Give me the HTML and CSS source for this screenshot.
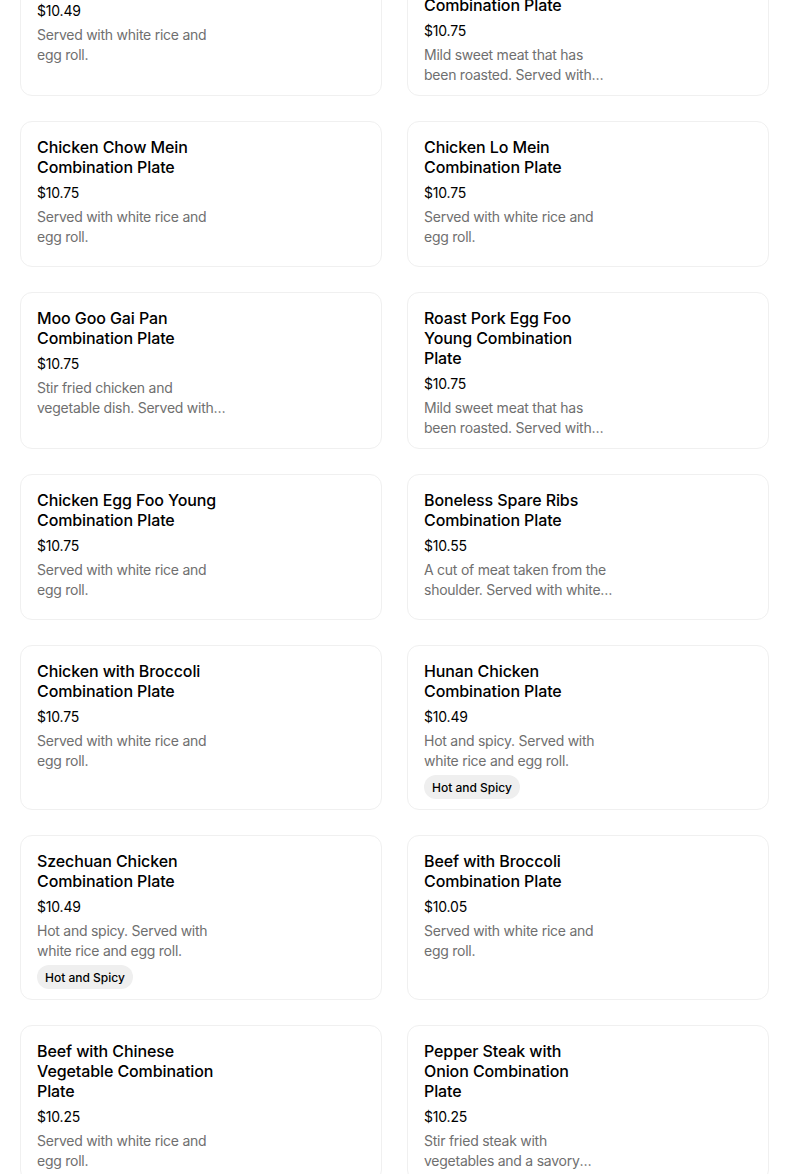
FILE: index.html
```html
<!DOCTYPE html>
<html lang="en">
<head>
<meta charset="utf-8">
<title>Combination Plates</title>
<link rel="stylesheet" href="styles.css">
</head>
<body>
<div class="grid">
  <div class="card"><div class="info">
    <div class="title">Sweet and Sour Pork Combination Plate</div>
    <div class="price">$10.49</div>
    <div class="desc">Served with white rice and egg roll.</div>
  </div></div>
  <div class="card"><div class="info">
    <div class="title">Roast Pork with Mixed Chinese Vegetable Combination Plate</div>
    <div class="price">$10.75</div>
    <div class="desc">Mild sweet meat that has been roasted. Served with white rice and egg roll.</div>
  </div></div>

  <div class="card"><div class="info">
    <div class="title">Chicken Chow Mein Combination Plate</div>
    <div class="price">$10.75</div>
    <div class="desc">Served with white rice and egg roll.</div>
  </div></div>
  <div class="card"><div class="info">
    <div class="title">Chicken Lo Mein Combination Plate</div>
    <div class="price">$10.75</div>
    <div class="desc">Served with white rice and egg roll.</div>
  </div></div>

  <div class="card"><div class="info">
    <div class="title">Moo Goo Gai Pan Combination Plate</div>
    <div class="price">$10.75</div>
    <div class="desc">Stir fried chicken and vegetable dish. Served with white rice and egg roll.</div>
  </div></div>
  <div class="card"><div class="info">
    <div class="title">Roast Pork Egg Foo Young Combination Plate</div>
    <div class="price">$10.75</div>
    <div class="desc">Mild sweet meat that has been roasted. Served with white rice and egg roll.</div>
  </div></div>

  <div class="card"><div class="info">
    <div class="title">Chicken Egg Foo Young Combination Plate</div>
    <div class="price">$10.75</div>
    <div class="desc">Served with white rice and egg roll.</div>
  </div></div>
  <div class="card"><div class="info">
    <div class="title">Boneless Spare Ribs Combination Plate</div>
    <div class="price">$10.55</div>
    <div class="desc">A cut of meat taken from the shoulder. Served with white rice and egg roll.</div>
  </div></div>

  <div class="card"><div class="info">
    <div class="title">Chicken with Broccoli Combination Plate</div>
    <div class="price">$10.75</div>
    <div class="desc">Served with white rice and egg roll.</div>
  </div></div>
  <div class="card"><div class="info">
    <div class="title">Hunan Chicken Combination Plate</div>
    <div class="price">$10.49</div>
    <div class="desc">Hot and spicy. Served with white rice and egg roll.</div>
    <div class="tags"><span class="tag">Hot and Spicy</span></div>
  </div></div>

  <div class="card"><div class="info">
    <div class="title">Szechuan Chicken Combination Plate</div>
    <div class="price">$10.49</div>
    <div class="desc">Hot and spicy. Served with white rice and egg roll.</div>
    <div class="tags"><span class="tag">Hot and Spicy</span></div>
  </div></div>
  <div class="card"><div class="info">
    <div class="title">Beef with Broccoli Combination Plate</div>
    <div class="price">$10.05</div>
    <div class="desc">Served with white rice and egg roll.</div>
  </div></div>

  <div class="card"><div class="info">
    <div class="title">Beef with Chinese Vegetable Combination Plate</div>
    <div class="price">$10.25</div>
    <div class="desc">Served with white rice and egg roll.</div>
  </div></div>
  <div class="card"><div class="info">
    <div class="title">Pepper Steak with Onion Combination Plate</div>
    <div class="price">$10.25</div>
    <div class="desc">Stir fried steak with vegetables and a savory brown sauce. Served with white rice and egg roll.</div>
  </div></div>
</div>
</body>
</html>
```
FILE: styles.css
```css
html, body {
  margin: 0;
  padding: 0;
  background: #ffffff;
}
body {
  font-family: Inter, "Noto Sans", "Liberation Sans", sans-serif;
  color: #000000;
  overflow: hidden;
}
.grid {
  display: grid;
  grid-template-columns: 362px 362px;
  column-gap: 25px;
  row-gap: 25px;
  padding-left: 20px;
  margin-top: -61px;
}
.card {
  box-sizing: border-box;
  min-height: 146px;
  border: 1px solid #f0f0f0;
  border-radius: 12px;
  padding: 15px 16px 10px 16px;
  display: flex;
  background: #ffffff;
}
.info {
  width: 191px;
  display: flex;
  flex-direction: column;
}
.title {
  max-width: 184px;
  font-size: 16px;
  font-weight: 500;
  line-height: 20px;
  color: #000000;
  letter-spacing: -0.1px;
}
.price {
  margin-top: 6px;
  font-size: 14px;
  line-height: 20px;
  color: #000000;
  letter-spacing: -0.2px;
}
.desc {
  margin-top: 4px;
  font-size: 14px;
  line-height: 20px;
  color: #6f6f6f;
  letter-spacing: -0.25px;
  display: -webkit-box;
  -webkit-line-clamp: 2;
  -webkit-box-orient: vertical;
  overflow: hidden;
}
.tags {
  margin-top: 4px;
  display: flex;
}
.tag {
  display: inline-flex;
  align-items: center;
  height: 24px;
  padding: 0 8px;
  border-radius: 12px;
  background: #efefef;
  font-size: 12px;
  font-weight: 500;
  color: #000000;
}
```
